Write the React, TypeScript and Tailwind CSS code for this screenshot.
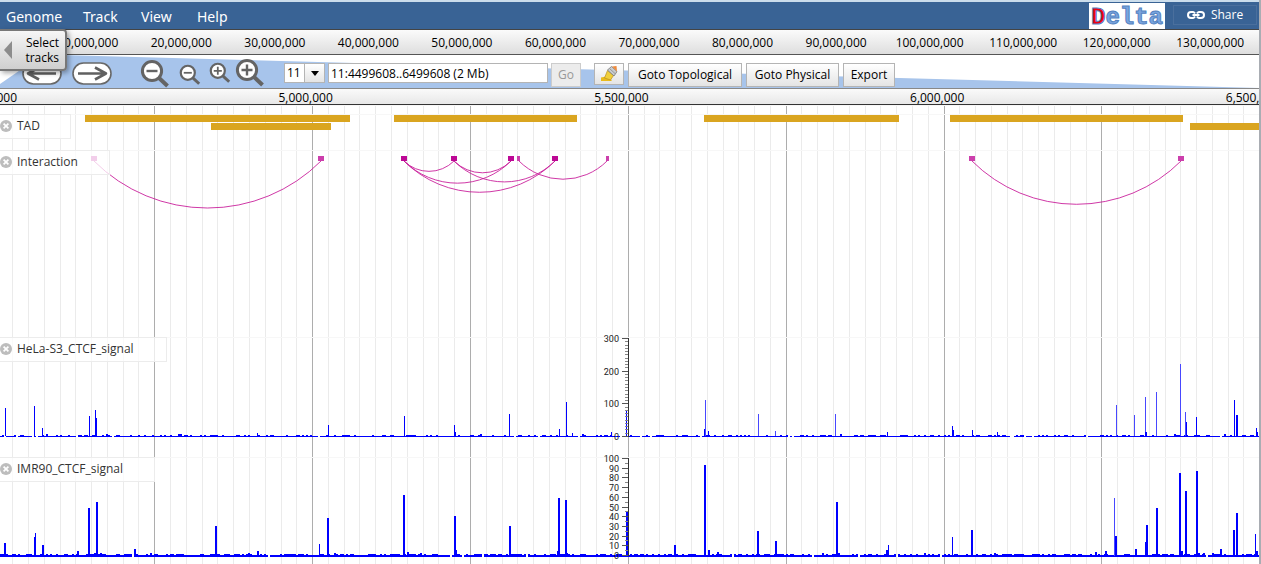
import React from "react";

const WIDTH = 1259;

type Spike = [x: number, height: number, width?: number, light?: boolean];

const overviewLabels = Array.from({ length: 13 }, (_, i) => `${(i + 1) * 10},000,000`);
const scaleLabels = ["4,500,000", "5,000,000", "5,500,000", "6,000,000", "6,500,000"];

const domains = [
  { x: 85, y: 1, w: 265 },
  { x: 211, y: 9, w: 120 },
  { x: 394, y: 1, w: 183 },
  { x: 704, y: 1, w: 195 },
  { x: 950, y: 1, w: 233 },
  { x: 1190, y: 9, w: 69 },
];

const anchors = [
  { x: 91, w: 6, soft: true },
  { x: 318, w: 6, soft: true },
  { x: 401, w: 6 },
  { x: 451, w: 6 },
  { x: 508, w: 6 },
  { x: 517, w: 3, soft: true },
  { x: 552, w: 6 },
  { x: 606, w: 3, soft: true },
  { x: 969, w: 6, soft: true },
  { x: 1178, w: 6, soft: true },
];

const links: [number, number][] = [
  [94, 321],
  [404, 454],
  [404, 511],
  [404, 555],
  [454, 511],
  [454, 555],
  [519, 607],
  [972, 1181],
];

const helaSpikes: Spike[] = [
  [5, 28], [34, 30], [42, 8], [89, 20], [95, 26], [96, 18], [257, 3], [328, 11], [404, 20],
  [454, 11], [455, 4], [509, 22], [559, 7], [566, 34], [572, 3], [611, 4], [626, 26],
  [704, 7], [705, 36, 1, true], [708, 5], [758, 22, 1, true], [775, 5, 1, true],
  [835, 22, 1, true], [887, 4], [952, 10], [953, 6], [972, 6], [997, 4],
  [1116, 31, 1, true], [1134, 21, 1, true], [1145, 39, 1, true], [1145, 4, 2], [1156, 44, 1, true],
  [1180, 72, 1, true], [1185, 24, 1, true], [1186, 14], [1196, 19], [1234, 36],
  [1236, 21, 2], [1256, 8], [1257, 4],
];

const imrSpikes: Spike[] = [
  [4, 13, 2], [34, 19], [35, 23], [42, 11, 2], [77, 5, 2], [88, 48, 2], [96, 54, 2],
  [134, 7, 2], [215, 30, 2], [257, 5, 2], [319, 12], [327, 38, 2], [403, 61, 2], [407, 4, 2],
  [454, 40, 2], [456, 6], [509, 30, 2], [557, 5, 2], [558, 58, 2], [565, 56, 2], [626, 45, 2],
  [674, 11, 2], [704, 91, 2], [708, 6, 2], [717, 4, 2], [757, 25, 2], [775, 15, 2], [836, 54, 2],
  [886, 6, 2], [888, 11], [952, 19], [971, 26, 2], [1095, 4, 2], [1105, 5, 2],
  [1114, 58, 1, true], [1115, 20, 2], [1135, 7, 2], [1145, 14], [1146, 31, 2], [1156, 48, 2],
  [1179, 83, 2], [1181, 5, 2], [1185, 65, 2], [1196, 85, 2], [1203, 3, 2], [1220, 7, 2],
  [1233, 26, 2], [1236, 43, 2], [1255, 22], [1256, 5, 2],
];

function noisePath(seed: number, baseline: number, base: number, chance: number) {
  let state = seed;
  const next = () => {
    state = (state * 48271) % 2147483647;
    return state / 2147483647;
  };
  let d = "";
  for (let x = 0; x < WIDTH; x += 2) {
    if (next() < 0.025) continue;
    const h = base + (next() < chance ? 1 : 0) + (next() < 0.05 ? 1 : 0);
    d += `M${x} ${baseline + 1}h2v-${h}h-2z`;
  }
  return d;
}

function GridLines({ height }: { height: number }) {
  return (
    <g shapeRendering="crispEdges">
      {Array.from({ length: 80 }, (_, i) => {
        const x = Math.round(12.2 + i * 15.785);
        const major = i % 10 === 9;
        return <rect key={i} x={x} y={0} width={1} height={height} fill={major ? "#adadad" : "#ebebeb"} />;
      })}
      <rect x={0} y={0} width={WIDTH} height={1} fill="#f7f7f7" />
    </g>
  );
}

function Track({ name, height, labelClass, children }: {
  name?: string;
  height: number;
  labelClass?: string;
  children?: React.ReactNode;
}) {
  return (
    <section className="relative">
      <svg
        className="block w-full overflow-visible"
        height={height}
        viewBox={`0 0 ${WIDTH} ${height}`}
        preserveAspectRatio="none"
        aria-hidden="true"
      >
        <GridLines height={height} />
        {children}
      </svg>
      {name && (
        <div className={`absolute left-0 top-0 flex h-[25px] items-center border border-l-0 border-[#ececec] bg-white/75 pb-px ${labelClass}`}>
          <button type="button" aria-label={`Close ${name}`} className="mr-[5px] h-3 w-3">
            <svg viewBox="0 0 12 12" className="h-3 w-3">
              <circle cx="6" cy="6" r="6" fill="#bdbdbd" />
              <path d="M3.6 3.6l4.8 4.8M8.4 3.6l-4.8 4.8" stroke="#fff" strokeWidth="1.7" />
            </svg>
          </button>
          <span className="whitespace-nowrap text-xs font-medium text-[#333]">{name}</span>
        </div>
      )}
    </section>
  );
}

function Signal({ spikes, seed, baseline, base, chance }: {
  spikes: Spike[];
  seed: number;
  baseline: number;
  base: number;
  chance: number;
}) {
  return (
    <g fill="#0000ff" shapeRendering="crispEdges">
      <path d={noisePath(seed, baseline, base, chance)} />
      {spikes.map(([x, h, w = 1, light], i) => (
        <rect key={i} x={x} y={baseline - h} width={w} height={h} fill={light ? "#4848ff" : "#0000ff"} />
      ))}
    </g>
  );
}

function Axis({ max, step, minor, top, bottom }: {
  max: number;
  step: number;
  minor: number;
  top: number;
  bottom: number;
}) {
  const yOf = (v: number) => Math.round(bottom - (v / max) * (bottom - top));
  return (
    <g>
      <g fill="#333" shapeRendering="crispEdges">
        <rect x={628} y={top} width={1} height={bottom - top + 1} />
        {Array.from({ length: max / minor + 1 }, (_, i) => {
          const major = (i * minor) % step === 0;
          return (
            <rect key={i} x={major ? 622 : 625} y={yOf(i * minor)} width={major ? 6 : 3} height={1} fill={major ? "#555" : "#888"} />
          );
        })}
      </g>
      <g fontSize={9} fill="#222" textAnchor="end" className="font-['Roboto',sans-serif]">
        {Array.from({ length: max / step + 1 }, (_, i) => (
          <text key={i} x={619} y={yOf(i * step) + 4}>{i * step}</text>
        ))}
      </g>
    </g>
  );
}

function PanArrow({ left }: { left?: boolean }) {
  return (
    <svg viewBox="0 0 40 24" className="h-6 w-10">
      <rect x="1" y="1" width="38" height="21" rx="10.5" fill="#fff" stroke="#686868" strokeWidth="1.6" />
      <g transform={left ? "translate(40 0) scale(-1 1)" : undefined}>
        <path d="M6 11.5H33M23 5.5l11 6-11 6" fill="none" stroke="#606060" strokeWidth="2.6" strokeLinejoin="round" />
      </g>
    </svg>
  );
}

function Magnifier({ plus, className }: { plus?: boolean; className: string }) {
  return (
    <svg viewBox="0 0 30 30" className={className}>
      <path d="M18.5 18.5L27.5 27" stroke="#646464" strokeWidth="4" />
      <circle cx="12" cy="12" r="9.6" fill="#fff" stroke="#646464" strokeWidth="3" />
      <path d={plus ? "M6.500 12h11M12 6.500v11" : "M6.500 12h11"} stroke="#646464" strokeWidth="2.4" />
    </svg>
  );
}

const buttonClass =
  "h-6 shrink-0 whitespace-nowrap border border-[#b4b4b4] bg-linear-to-b from-white to-[#e4e4e4] text-xs text-black";

export default function App() {
  return (
    <div className="relative overflow-hidden border-r-2 border-[#a9adb3] bg-white font-['Open_Sans','Noto_Sans',sans-serif] text-black">
      <header className="flex h-[30px] items-start justify-between border-b border-t-2 border-b-[#444] border-t-[#cbddec] bg-[#396395]">
        <nav className="flex pl-[6px] pt-[5px] font-['Noto_Sans',sans-serif] text-sm text-white">
          <button type="button" className="w-[77px] text-left">Genome</button>
          <button type="button" className="w-[58px] text-left">Track</button>
          <button type="button" className="w-[56px] text-left">View</button>
          <button type="button" className="text-left">Help</button>
        </nav>
        <div className="flex items-start pr-[2px]">
          <a href="#delta" className="mt-px flex h-[26px] w-[76px] items-center justify-center bg-white pt-[3px] font-['Liberation_Mono',monospace] text-2xl leading-6 font-bold text-[#79a5df] [-webkit-text-stroke:1px_#5482c0]">
            <span className="text-[#f00010]">D</span>elta
          </a>
          <button type="button" className="ml-2 mt-[3px] flex h-5 w-[84px] items-center justify-center gap-[6px] border border-[#4a6f9d] text-xs text-white">
            <svg viewBox="0 0 18 8" className="h-2 w-[18px]" fill="none" stroke="#fff" strokeWidth="2">
              <path d="M8 2.500A3 3 0 0 0 6 1H4a3 3 0 0 0 0 6h2a3 3 0 0 0 2-1.500M10 2.500A3 3 0 0 1 12 1h2a3 3 0 0 1 0 6h-2a3 3 0 0 1-2-1.500M5.500 4h7" />
            </svg>
            Share
          </button>
        </div>
      </header>

      <div className="grid h-[25px] grid-cols-13 items-center border-b border-[#555] bg-linear-to-b from-[#fbfbfb] to-[#dedede] pl-[41px] pr-[2px] pt-[2px] text-center text-xs">
        {overviewLabels.map((label) => (
          <span key={label}>{label}</span>
        ))}
      </div>

      <div className="relative h-[34px] border-b border-[#888]">
        <svg className="absolute inset-0 h-full w-full" viewBox="0 0 1259 33" preserveAspectRatio="none" aria-hidden="true">
          <path d="M42 0H61L1259 33H0V29Z" fill="#a7c4eb" />
        </svg>
        <div className="relative flex items-start pl-[22px] pt-2">
          <button type="button" aria-label="Pan left" className="-mt-px shrink-0"><PanArrow left /></button>
          <button type="button" aria-label="Pan right" className="-mt-px ml-[10px] shrink-0"><PanArrow /></button>
          <button type="button" aria-label="Zoom out far" className="-mt-1 ml-7 shrink-0"><Magnifier className="h-[30px] w-[30px]" /></button>
          <button type="button" aria-label="Zoom out" className="mt-px ml-[9px] shrink-0"><Magnifier className="h-[22px] w-[22px]" /></button>
          <button type="button" aria-label="Zoom in" className="-mt-px ml-2 shrink-0"><Magnifier plus className="h-[22px] w-[22px]" /></button>
          <button type="button" aria-label="Zoom in far" className="-mt-[5px] ml-1 shrink-0"><Magnifier plus className="h-[30px] w-[30px]" /></button>
          <div className="relative ml-[19px] h-5 w-[41px] shrink-0">
            <select aria-label="Chromosome" defaultValue="11" className="block h-5 w-full appearance-none border border-[#b4b4b4] bg-white pl-[2px] text-xs">
              <option value="11">11</option>
            </select>
            <span className="pointer-events-none absolute right-px top-px flex h-[18px] w-5 items-center justify-center border-l border-[#b4b4b4] bg-linear-to-b from-white to-[#e4e4e4]">
              <svg viewBox="0 0 8 5" className="h-[5px] w-2"><path d="M0 0h8L4 5z" /></svg>
            </span>
          </div>
          <input aria-label="Location" defaultValue="11:4499608..6499608 (2 Mb)" className="ml-[3px] h-5 w-[220px] shrink-0 border border-[#b4b4b4] bg-white px-[2px] pt-px text-xs" />
          <button type="button" disabled className="ml-[3px] h-6 w-[30px] shrink-0 border border-[#ccc] bg-[#ececec] text-xs text-[#999]">Go</button>
          <button type="button" aria-label="Highlight" className="ml-[13px] flex h-[22px] w-[30px] shrink-0 items-center justify-center border border-[#b4b4b4] bg-linear-to-b from-white to-[#e4e4e4]">
            <svg viewBox="0 0 18 16" className="h-4 w-[18px]">
              <path d="M1 11.500l5-1 6 4-1 .5H1z" fill="#e9bb1c" />
              <path d="M7.500 4.500l6 5-3 4.500-6-2z" fill="#f0cf3c" stroke="#b98e20" strokeWidth=".7" />
              <path d="M7.500 4l4-3.500 5.500 5-3 4.500z" fill="#c9cccf" stroke="#777" strokeWidth=".8" />
              <path d="M12 .5l4.500-.5.5 5.500z" fill="#ee8a3c" />
              <path d="M10 3l5 4.500" stroke="#999" />
            </svg>
          </button>
          <button type="button" className={`ml-1 w-[114px] ${buttonClass}`}>Goto Topological</button>
          <button type="button" className={`ml-1 w-[93px] ${buttonClass}`}>Goto Physical</button>
          <button type="button" className={`ml-1 w-[52px] ${buttonClass}`}>Export</button>
        </div>
      </div>

      <div className="h-4 overflow-hidden border-b border-[#333] bg-linear-to-b from-[#fafafa] to-[#e8e8e8]">
        <div className="-ml-[168px] grid w-[125.4%] grid-cols-5 text-center text-xs leading-[18px]">
          {scaleLabels.map((label) => (
            <span key={label}>{label}</span>
          ))}
        </div>
      </div>

      <main>
        <Track height={9} />
        <Track name="TAD" height={36} labelClass="w-[71px]">
          <g fill="#daa520" shapeRendering="crispEdges">
            {domains.map((d) => (
              <rect key={d.x} x={d.x} y={d.y} width={d.w} height={7} />
            ))}
          </g>
        </Track>
        <Track name="Interaction" height={187} labelClass="w-[110px]">
          <g fill="none" stroke="#c71597" strokeOpacity={0.85} strokeWidth={1}>
            {links.map(([a, b]) => {
              const r = (b - a) / Math.SQRT2;
              return <path key={`${a}-${b}`} d={`M${a} 11A${r} ${r} 0 0 0 ${b} 11`} />;
            })}
          </g>
          <g shapeRendering="crispEdges">
            {anchors.map((a) => (
              <rect key={a.x} x={a.x} y={6} width={a.w} height={5} fill={a.soft ? "#cc3fac" : "#bd0895"} />
            ))}
          </g>
        </Track>
        <Track name="HeLa-S3_CTCF_signal" height={120} labelClass="w-[167px]">
          <Signal spikes={helaSpikes} seed={1771} baseline={99} base={1} chance={0.28} />
          <Axis max={300} step={100} minor={10} top={1} bottom={99} />
        </Track>
        <Track name="IMR90_CTCF_signal" height={107} labelClass="w-[155px]">
          <Signal spikes={imrSpikes} seed={9103} baseline={99} base={2} chance={0.4} />
          <Axis max={100} step={10} minor={5} top={1} bottom={98} />
        </Track>
      </main>

      <button type="button" className="absolute left-0 top-[29px] flex h-[42px] w-[67px] items-center justify-between rounded-r border-2 border-l-0 border-[#777] bg-linear-to-b from-[#f6f6f6] to-[#cfcfcf] pl-1 pr-[6px] text-right text-xs leading-[15px] shadow-[2px_2px_5px_rgba(0,0,0,0.35)]">
        <svg viewBox="0 0 8 18" className="h-[18px] w-2"><path d="M8 0v18L0 9z" fill="#8c8c8c" /></svg>
        <span>Select<br />tracks</span>
      </button>
    </div>
  );
}
